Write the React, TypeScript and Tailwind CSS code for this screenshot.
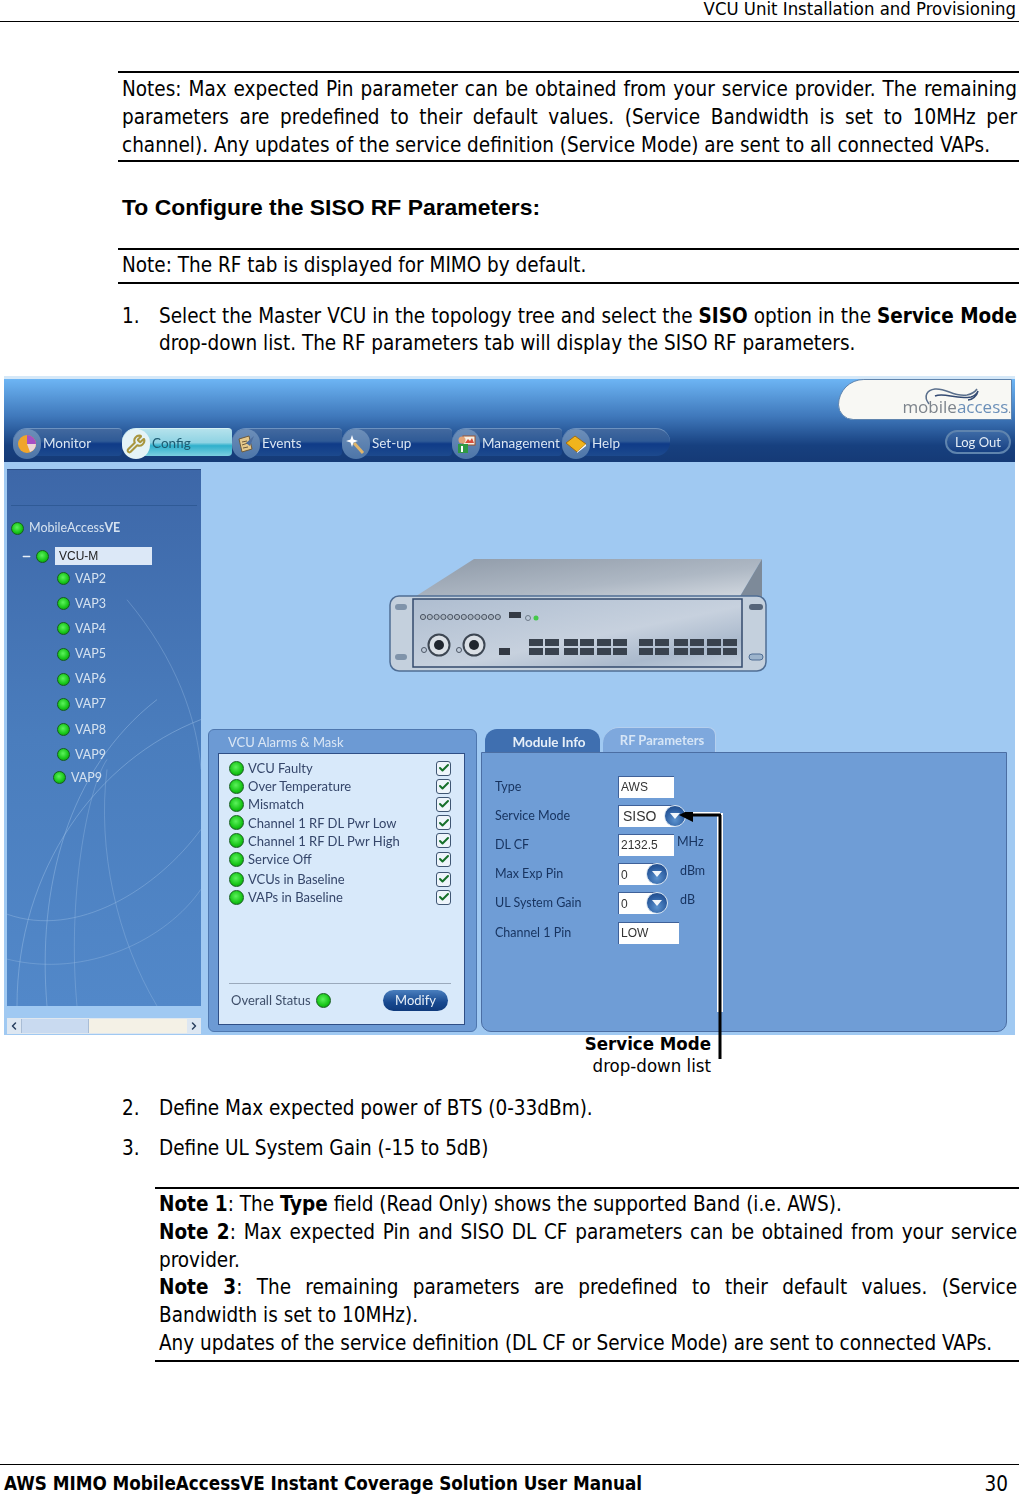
import { Check, ChevronLeft, ChevronRight, Minus, Wrench } from "lucide-react";

const VAPS = ["VAP2", "VAP3", "VAP4", "VAP5", "VAP6", "VAP7", "VAP8", "VAP9"];

const ALARMS = [
  { label: "VCU Faulty", gap: "mt-0" },
  { label: "Over Temperature", gap: "mt-0" },
  { label: "Mismatch", gap: "mt-0" },
  { label: "Channel 1 RF DL Pwr Low", gap: "mt-0" },
  { label: "Channel 1 RF DL Pwr High", gap: "mt-0" },
  { label: "Service Off", gap: "mt-0" },
  { label: "VCUs in Baseline", gap: "mt-[2px]" },
  { label: "VAPs in Baseline", gap: "mt-0" },
];

function Led({ big }: { big?: boolean }) {
  return (
    <span
      className={
        "block shrink-0 rounded-full border border-[#14601c] bg-[radial-gradient(circle_at_45%_40%,#5cf25c,#16c416_60%,#0b7a18)] " +
        (big ? "h-[15px] w-[15px]" : "h-[13px] w-[13px]")
      }
    />
  );
}

function Spinner({ className }: { className: string }) {
  return (
    <span className={"relative z-10 flex h-[22px] w-[22px] shrink-0 items-center justify-center rounded-full border border-[#dbe7f3] bg-[radial-gradient(circle_at_50%_70%,#5c93cf,#2b5c9f_60%,#1d4480)] " + className}>
      <svg width="10" height="6" viewBox="0 0 10 6"><path d="M0 0h10L5 6z" fill="#f2f7fc" /></svg>
    </span>
  );
}

function NavTab({ label, icon, active, last }: { label: string; icon: React.ReactNode; active?: boolean; last?: boolean }) {
  return (
    <div className={"relative flex h-[34px] items-start " + (label === "Monitor" ? "w-[109px]" : last ? "w-[108px]" : "w-[110px]")}>
      <div
        className={
          "mt-[1px] flex h-[28px] w-full items-center rounded-l-[14px] pl-[29px] text-[13.5px] " +
          (last ? "rounded-r-[14px] " : "rounded-r-[4px] ") +
          (active
            ? "border-t border-[#d6f0f5] bg-[linear-gradient(#b4e2ec,#8fd3e3_50%,#2fb0cc_62%,#7ccfe0)] text-[#1d5a70]"
            : "border-t border-[#6d92bf] bg-[linear-gradient(#42699f,#2f5a96_45%,#0f3b88_55%,#1d4a8e)] text-[#dbe6f2]")
        }
      >
        <span className="ml-[1px] whitespace-nowrap font-['Lato',sans-serif]">{label}</span>
      </div>
      <div className={"absolute left-0 top-[2px] flex h-[30px] w-[28px] items-center justify-center rounded-full " + (active ? "bg-[#e4f3f7]" : "bg-[linear-gradient(#6d8fb9,#4d75a8)]")}>
        {icon}
      </div>
    </div>
  );
}

function Arcs() {
  return (
    <svg className="absolute inset-0 h-full w-full" viewBox="0 0 194 537" preserveAspectRatio="none" fill="none">
      <path d="M10 537C10 400 90 290 194 250" stroke="#9cc0e6" strokeOpacity=".45" />
      <path d="M40 537C30 420 60 300 150 230" stroke="#9cc0e6" strokeOpacity=".45" />
      <path d="M70 537C60 430 80 320 100 290" stroke="#9cc0e6" strokeOpacity=".35" />
      <path d="M150 537C110 470 90 380 100 300" stroke="#9cc0e6" strokeOpacity=".35" />
      <path d="M0 445C70 470 150 420 194 360" stroke="#9cc0e6" strokeOpacity=".4" />
      <path d="M0 490C80 510 160 470 194 420" stroke="#9cc0e6" strokeOpacity=".35" />
      <path d="M120 130C170 190 190 250 194 300" stroke="#9cc0e6" strokeOpacity=".35" />
    </svg>
  );
}

function Device() {
  const groups = [140, 175, 208, 250, 285, 318];
  return (
    <svg width="378" height="114" viewBox="0 0 378 114">
      <defs>
        <linearGradient id="top" x1="0" y1="0" x2="1" y2="1">
          <stop offset="0" stopColor="#8f9aa8" />
          <stop offset=".6" stopColor="#aeb8c4" />
          <stop offset="1" stopColor="#d5dbe2" />
        </linearGradient>
        <linearGradient id="face" x1="0" y1="0" x2="1" y2="1">
          <stop offset="0" stopColor="#aebdd0" />
          <stop offset=".55" stopColor="#c7d1de" />
          <stop offset=".8" stopColor="#aab9cc" />
          <stop offset="1" stopColor="#c3cfdc" />
        </linearGradient>
      </defs>
      <path d="M85 1H373L350 40H24z" fill="url(#top)" />
      <path d="M373 1V40H350z" fill="#7d8a99" />
      <rect x="1" y="38" width="376" height="75" rx="9" fill="#c4d0dd" stroke="#4f6d94" strokeWidth="1.5" />
      <rect x="24" y="41" width="329" height="68" fill="url(#face)" stroke="#334a6c" strokeWidth="1.5" />
      <rect x="360" y="46" width="14" height="6" rx="3" fill="#56657a" />
      <rect x="360" y="96" width="14" height="6" rx="3" fill="#9db4cc" stroke="#4f6d94" />
      <rect x="6" y="46" width="12" height="6" rx="3" fill="#7f93aa" />
      <rect x="6" y="96" width="12" height="6" rx="3" fill="#7f93aa" />
      {Array.from({ length: 12 }).map((_, i) => (
        <circle key={i} cx={34 + i * 6.8} cy="59" r="2.6" fill="#a9b4c0" stroke="#4c5665" strokeWidth="1" />
      ))}
      <rect x="120" y="54" width="12" height="6" fill="#343a44" />
      <circle cx="139" cy="60" r="2.5" fill="none" stroke="#6d7a88" />
      <circle cx="147" cy="60" r="2.5" fill="#45c94a" />
      {[50, 85].map((x) => (
        <g key={x}>
          <circle cx={x} cy="87" r="10.5" fill="#dbe0e6" stroke="#3d4652" strokeWidth="2" />
          <circle cx={x} cy="87" r="5" fill="#20262e" />
          <circle cx={x - 15} cy="92" r="2.5" fill="none" stroke="#4c5665" />
        </g>
      ))}
      <rect x="110" y="90" width="11" height="7" fill="#343a44" />
      {groups.map((x) => (
        <g key={x} fill="#39424e">
          <rect x={x} y="81" width="14" height="7" />
          <rect x={x + 16} y="81" width="14" height="7" />
          <rect x={x} y="90" width="14" height="7" />
          <rect x={x + 16} y="90" width="14" height="7" />
        </g>
      ))}
    </svg>
  );
}

function ParamRow({ label, value, width, children }: { label: string; value: string; width: string; children?: React.ReactNode }) {
  return (
    <div className="flex h-[29.2px] items-center">
      <span className="w-[123px] text-[12.5px] text-[#17335f]">{label}</span>
      <span className={"relative flex h-[22px] items-center border-t border-l border-[#3f6199] bg-white pl-[2px] text-[12px] text-[#333] " + width}>
        <span className="font-['Liberation_Sans',sans-serif]">{value}</span>
      </span>
      {children}
    </div>
  );
}

function Screenshot() {
  return (
    <div className="ml-[4px] flex h-[659px] w-[1011px] flex-col bg-[#a0c9f2] font-['Lato',sans-serif] blur-[0.4px]">
      {/* top band */}
      <div className="relative flex h-[86px] items-end justify-between border-t-[3px] border-[#d5e8f8] bg-[linear-gradient(#6db5f4,#3f78bb_45%,#17407f_80%,#153a76)] pb-[1px] pl-[9px] pr-[4px]">
        <div className="flex">
          <NavTab label="Monitor" icon={<svg width="22" height="22" viewBox="0 0 22 22"><circle cx="11" cy="11" r="9" fill="#f0a52a" /><path d="M11 11V2a9 9 0 0 1 9 9z" fill="#a64fc4" /><path d="M11 11h9a9 9 0 0 1-6 8z" fill="#ecd6d8" /></svg>} />
          <NavTab label="Config" active icon={<Wrench size={20} strokeWidth={2.5} className="text-[#a8963f]" />} />
          <NavTab label="Events" icon={<svg width="20" height="20" viewBox="0 0 20 20"><path d="M3 5l10-3 3 13-10 3z" fill="#e6c98b" stroke="#6d5a3c" /><path d="M6 8l5-1M6 11l6-2M7 14l5-1" stroke="#6d5a3c" /><path d="M10 9l8-7-4 10z" fill="#4d6d9e" /></svg>} />
          <NavTab label="Set-up" icon={<svg width="22" height="22" viewBox="0 0 22 22"><path d="M9 10l9 10" stroke="#e0b56a" strokeWidth="3" /><path d="M7 2l1.5 4.5L13 8 8.5 9.5 7 14 5.5 9.5 1 8l4.5-1.5z" fill="#fff" /></svg>} />
          <NavTab label="Management" icon={<svg width="22" height="22" viewBox="0 0 22 22"><rect x="8" y="3" width="12" height="9" fill="#f4f0e4" stroke="#a0522d" /><path d="M10 10l3-4 2 2 2-3 2 5z" fill="#d84f3c" /><rect x="3" y="11" width="10" height="9" fill="#2f9a44" /><circle cx="7" cy="7" r="3.5" fill="#e2a477" /><path d="M7 13v6" stroke="#fff" strokeWidth="2" /></svg>} />
          <NavTab label="Help" last icon={<svg width="22" height="20" viewBox="0 0 22 20"><path d="M1 9l9-7 11 8-9 8z" fill="#f1b41c" stroke="#a36c10" /><path d="M12 18l9-8v2l-9 7z" fill="#fff" /></svg>} />
        </div>
        <div className="absolute right-[3px] top-0 flex h-[41px] w-[174px] items-end justify-end rounded-tl-[34px] rounded-bl-[20px] border border-[#5f84ae] bg-[#f8f8f4] pr-0">
          <svg className="absolute right-[22px] top-[6px]" width="70" height="20" viewBox="0 0 66 20" fill="none">
            <path d="M8 18C2 10 6 4 14 3c12-1 18 8 32 6 5-1 8-3 10-6" stroke="#5a6f8c" strokeWidth="1.5" />
            <path d="M14 10c10-4 20 4 36 1 3-1 6-4 7-6-1 5-6 9-10 9" stroke="#344b73" strokeWidth="1.5" />
          </svg>
          <span className="relative text-[17px] leading-[20px] text-[#7d848c] font-['Open_Sans',sans-serif]">mobile<span className="text-[#6b8fb8]">access</span><span className="text-[10px]">.</span></span>
        </div>
        <div className="mb-[7px] flex h-[24px] w-[66px] items-center justify-center rounded-full border-2 border-[#5f84ae] bg-[linear-gradient(#3d6aa5,#163f82)] text-[13px] text-[#e4edf6]">
          Log Out
        </div>
      </div>

      <div className="flex flex-1">
        {/* topology */}
        <div className="ml-[3px] mt-[7px] w-[194px]">
          <div className="relative h-[537px] overflow-hidden border-t border-[#2e4f85] bg-[linear-gradient(#3d67a8,#4a7dbd_50%,#5288c9)]">
            <Arcs />
            <div className="relative mx-[4px] mt-[35px] border-t border-[#2f5a96]" />
            <div className="relative flex flex-col text-[12.5px] text-[#d5e2f0]">
              <div className="mt-[8px] flex items-center gap-[5px] pl-[4px]">
                <Led /> <span>MobileAccess<b>VE</b></span>
              </div>
              <div className="mt-[5px] flex h-[18px] items-center pl-[14px]">
                <Minus size={11} strokeWidth={3} className="text-[#e8eff7]" />
                <span className="ml-[4px]"><Led /></span>
                <span className="ml-[6px] flex h-[18px] w-[97px] items-center bg-[#dce8f7] pl-[4px] font-['Liberation_Sans',sans-serif] text-[12px] text-[#222]">VCU-M</span>
              </div>
              <div className="mt-[7px] flex flex-col gap-[12.2px] pl-[50px]">
                {VAPS.map((v) => (
                  <div key={v} className="flex h-[13px] items-center gap-[5px]"><Led /><span>{v}</span></div>
                ))}
              </div>
              <div className="mt-[10px] flex h-[13px] items-center gap-[5px] pl-[46px]"><Led /><span>VAP9</span></div>
            </div>
          </div>
          <div className="mt-[12px] flex h-[16px] items-center border-y border-[#dfe7ef] bg-[#f4f1e6]">
            <span className="flex h-full w-[14px] items-center justify-center bg-[#dde7f2]"><ChevronLeft size={12} strokeWidth={3} className="text-[#2a4060]" /></span>
            <span className="h-full w-[68px] border-x border-[#a9bdd6] bg-[#c9daf0]" />
            <span className="flex-1" />
            <span className="flex h-full w-[14px] items-center justify-center bg-[#dde7f2]"><ChevronRight size={12} strokeWidth={3} className="text-[#2a4060]" /></span>
          </div>
        </div>

        {/* module view */}
        <div className="flex flex-1 flex-col">
          <div className="ml-[188px] mt-[96px]"><Device /></div>
          <div className="mt-[57px] flex items-start pl-[7px]">
            <div className="h-[303px] w-[269px] rounded-[6px] border border-[#4e77af] bg-[#6c9ad4] px-[9px] pt-[5px]">
              <div className="h-[18px] pl-[10px] text-[13px] leading-[15px] text-[#dbe7f5]">VCU Alarms &amp; Mask</div>
              <div className="flex h-[272px] w-[247px] flex-col border border-[#2f4f86] bg-[#d8e9fa] pl-[10px] pr-[13px] pt-[5px]">
                {ALARMS.map((a) => (
                  <div key={a.label} className={"flex h-[18.2px] items-center justify-between " + a.gap}>
                    <div className="flex items-center gap-[4px] text-[13px] text-[#35466a]">
                      <Led big /> <span>{a.label}</span>
                    </div>
                    <span className="flex h-[15px] w-[15px] items-center justify-center rounded-[3px] border border-[#3f5673] bg-[#eef5fb]">
                      <Check size={12} strokeWidth={4} className="text-[#16702a]" />
                    </span>
                  </div>
                ))}
                <div className="mb-[8px] mt-auto border-t border-[#9aa9bb]">
                  <div className="flex h-[32px] items-center justify-between pl-[2px] pr-[3px]">
                    <div className="flex items-center gap-[5px] text-[13px] text-[#3f4f6a]">
                      <span>Overall Status</span> <Led big />
                    </div>
                    <span className="flex h-[21px] w-[65px] items-center justify-center rounded-full bg-[linear-gradient(#4a7fbe,#17488f_60%,#0f3a7c)] text-[13px] text-[#e8f0f8]">Modify</span>
                  </div>
                </div>
              </div>
            </div>
            <div className="ml-[4px] flex w-[526px] flex-col">
              <div className="flex h-[23px] items-end pl-[4px]">
                <div className="flex h-[23px] w-[115px] items-center justify-center rounded-t-[12px] bg-[#3f6fb0] pl-[13px] pt-[3px] text-[13.5px] font-bold text-[#e6eff8]">Module Info</div>
                <div className="ml-[3px] flex h-[25px] w-[113px] items-center justify-center rounded-tl-[16px] rounded-tr-[8px] border-r border-t border-[#b5cfee] bg-[#7ea8dd] pl-[6px] text-[13px] font-bold text-[#d6e5f6]">RF Parameters</div>
              </div>
              <div className="h-[280px] rounded-b-[10px] border border-[#4b6ea3] bg-[#6f9dd6] pl-[13px] pt-[19px]">
                <ParamRow label="Type" value="AWS" width="w-[56px]" />
                <ParamRow label="Service Mode" value="SISO" width="w-[57px] !pl-[4px] !text-[14px]">
                  <Spinner className="-ml-[11px]" />
                </ParamRow>
                <ParamRow label="DL CF" value="2132.5" width="w-[56px]">
                  <span className="-mt-[6px] ml-[3px] text-[12.5px] text-[#17335f]">MHz</span>
                </ParamRow>
                <ParamRow label="Max Exp Pin" value="0" width="w-[38px]">
                  <Spinner className="-ml-[10px]" />
                  <span className="-mt-[6px] ml-[12px] text-[12.5px] text-[#17335f]">dBm</span>
                </ParamRow>
                <ParamRow label="UL System Gain" value="0" width="w-[38px]">
                  <Spinner className="-ml-[10px]" />
                  <span className="-mt-[6px] ml-[12px] text-[12.5px] text-[#17335f]">dB</span>
                </ParamRow>
                <ParamRow label="Channel 1 Pin" value="LOW" width="w-[61px]" />
              </div>
            </div>
          </div>
        </div>
      </div>
    </div>
  );
}

export default function App() {
  return (
    <div className="relative flex h-[1495px] w-[1019px] flex-col overflow-hidden bg-white font-['DejaVu_Sans_Condensed','DejaVu_Sans',sans-serif] text-[20.5px] leading-[28px] text-black">
      <header className="h-[22px] border-b border-black pr-[3px] text-right text-[18.4px] leading-[18px]">
        VCU Unit Installation and Provisioning
      </header>

      <div className="ml-[118px] mt-[49px] h-[91px] border-y-2 border-black pl-[4px] pr-[2px] pt-[2px]">
        <p className="[text-align-last:justify]">Notes: Max expected Pin parameter can be obtained from your service provider. The remaining</p>
        <p className="[text-align-last:justify]">parameters are predefined to their default values. (Service Bandwidth is set to 10MHz per</p>
        <p>channel). Any updates of the service definition (Service Mode) are sent to all connected VAPs.</p>
      </div>

      <h2 className="ml-[122px] mt-[31px] font-['Liberation_Sans',sans-serif] text-[22.9px] font-bold leading-[28px]">To Configure the SISO RF Parameters:</h2>

      <div className="ml-[118px] mt-[27px] h-[36px] border-y-2 border-black pl-[4px] leading-[30px]">
        Note: The RF tab is displayed for MIMO by default.
      </div>

      <div className="mt-[19px] flex pl-[122px] pr-[2px] leading-[27px]">
        <span className="w-[37px] shrink-0">1.</span>
        <div className="flex-1">
          <p className="[text-align-last:justify]">Select the Master VCU in the topology tree and select the <b>SISO</b> option in the <b>Service Mode</b></p>
          <p>drop-down list. The RF parameters tab will display the SISO RF parameters.</p>
        </div>
      </div>

      <div className="relative mt-[19px]">
        <Screenshot />
        {/* callout arrow */}
        <svg className="absolute left-[676px] top-[436px]" width="50" height="264" viewBox="0 0 50 264" fill="none">
          <path d="M44 1V200" stroke="#fff" strokeWidth="6" />
          <path d="M44 1H14" stroke="#fff" strokeWidth="6" />
          <path d="M44 3V247M45 3H14" stroke="#000" strokeWidth="3" />
          <path d="M3 3l14-7v14z" fill="#000" />
        </svg>
      </div>

      <div className="mt-[-2px] pr-[308px] text-right text-[18.5px] leading-[22px]">
        <div className="font-bold">Service Mode</div>
        <div>drop-down list</div>
      </div>

      <div className="mt-[17px] flex pl-[122px]">
        <span className="w-[37px] shrink-0">2.</span>
        <p>Define Max expected power of BTS (0-33dBm).</p>
      </div>
      <div className="mt-[12px] flex pl-[122px]">
        <span className="w-[37px] shrink-0">3.</span>
        <p>Define UL System Gain (-15 to 5dB)</p>
      </div>

      <div className="ml-[155px] mt-[25px] h-[175px] border-y-2 border-black pl-[4px] pr-[2px] pt-[2px] leading-[27.8px]">
        <p><b>Note 1</b>: The <b>Type</b> field (Read Only) shows the supported Band (i.e. AWS).</p>
        <p className="[text-align-last:justify]"><b>Note 2</b>: Max expected Pin and SISO DL CF parameters can be obtained from your service</p>
        <p>provider.</p>
        <p className="[text-align-last:justify]"><b>Note 3</b>: The remaining parameters are predefined to their default values. (Service</p>
        <p>Bandwidth is set to 10MHz).</p>
        <p>Any updates of the service definition (DL CF or Service Mode) are sent to connected VAPs.</p>
      </div>

      <footer className="mt-auto flex h-[31px] items-center justify-between border-t border-black pl-[4px] pr-[11px] pt-[8px]">
        <span className="text-[18.7px] font-bold">AWS MIMO MobileAccessVE Instant Coverage Solution User Manual</span>
        <span>30</span>
      </footer>
    </div>
  );
}
